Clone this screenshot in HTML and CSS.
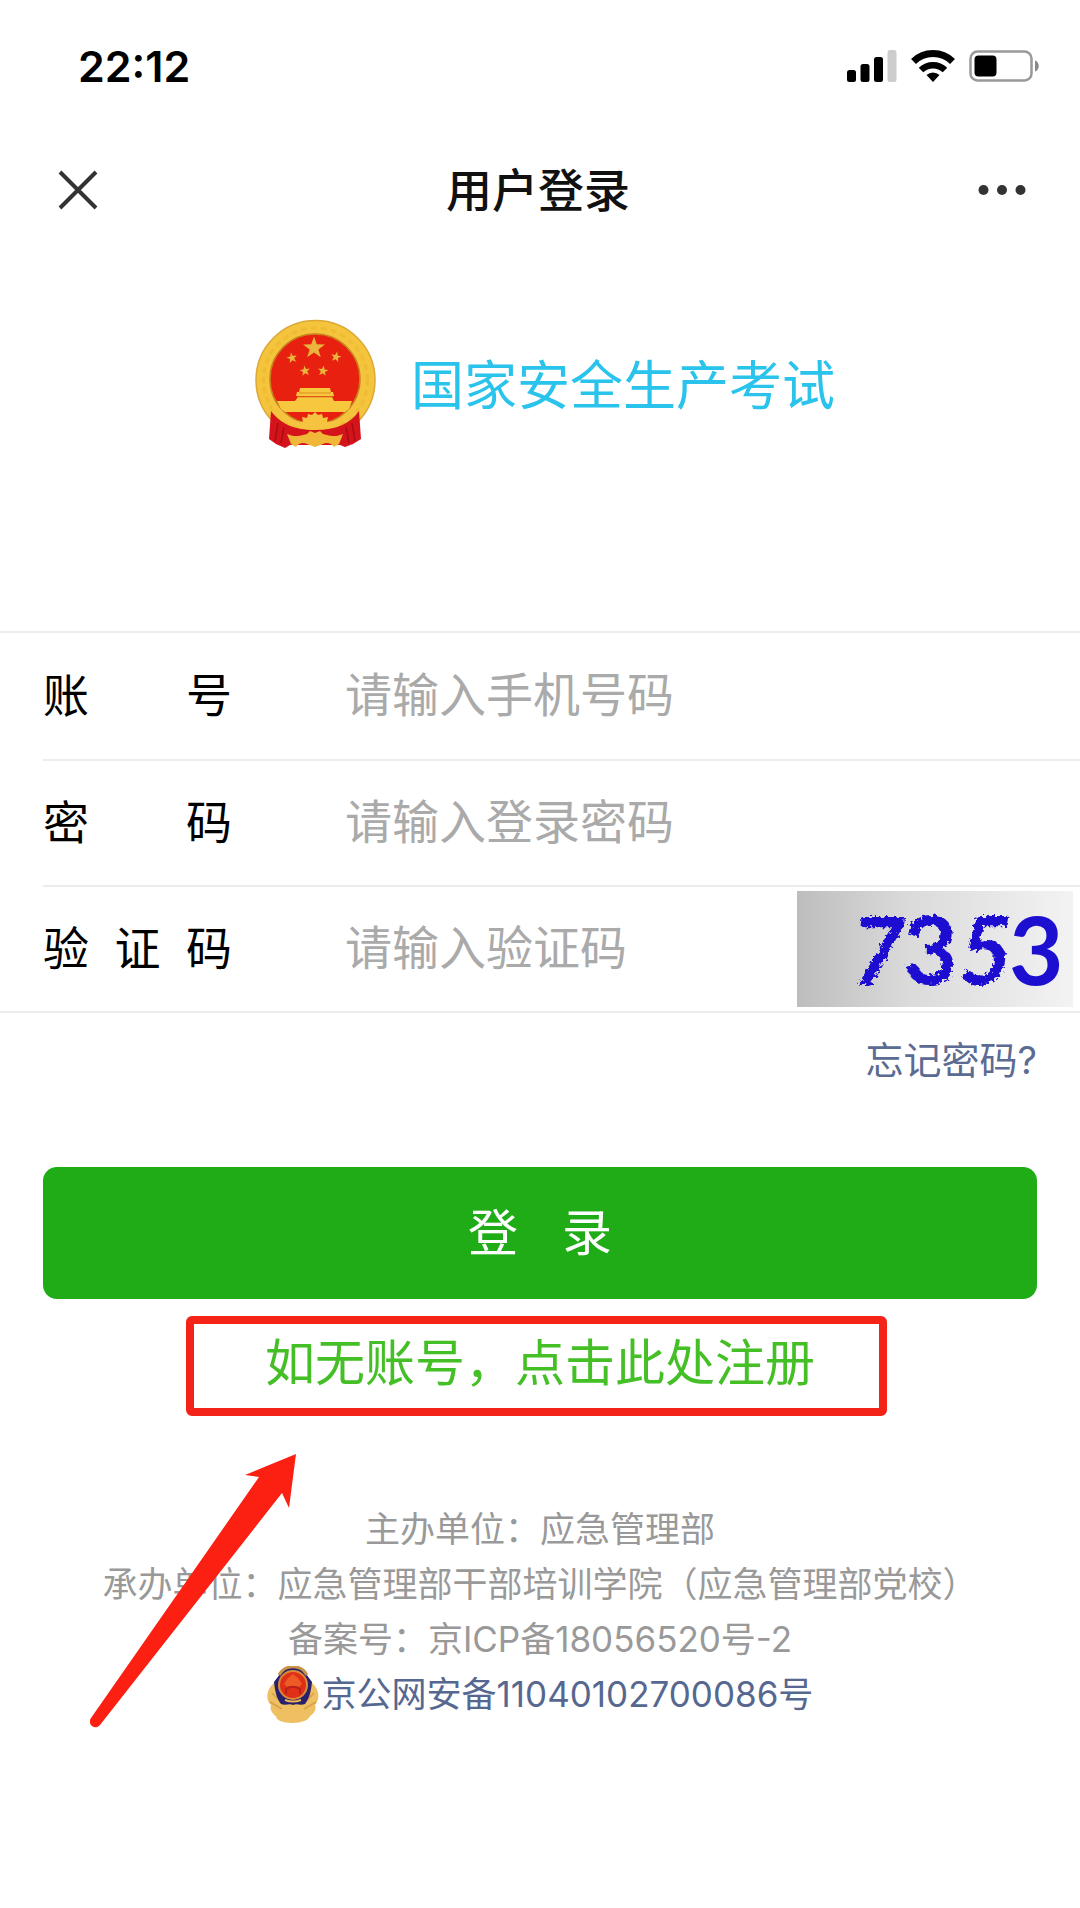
FILE: index.html
```html
<!DOCTYPE html>
<html lang="zh-CN">
<head>
  <meta charset="UTF-8">
  <meta name="viewport" content="width=device-width, initial-scale=1.0">
  <title>用户登录</title>
  <link rel="stylesheet" href="styles.css">
</head>
<body>
  <div class="status-bar">
    <span class="time">22:12</span>
    <div class="status-icons">
      <svg width="50" height="32" viewBox="0 0 50 32">
        <rect x="0" y="20" width="9" height="12" rx="2.5"/>
        <rect x="13.5" y="14" width="9" height="18" rx="2.5"/>
        <rect x="27" y="7" width="9" height="25" rx="2.5"/>
        <rect x="40.5" y="0" width="9" height="32" rx="2.5" fill="#cdcdcd"/>
      </svg>
      <svg width="44" height="32" viewBox="0 0 44 32">
        <path d="M2.500 11.500a28 28 0 0 1 39 0" fill="none" stroke="#000" stroke-width="7"/>
        <path d="M10 20a17.500 17.500 0 0 1 24 0" fill="none" stroke="#000" stroke-width="6.500"/>
        <path d="M22 32l-6.500-7a9.500 9.500 0 0 1 13 0z"/>
      </svg>
      <svg width="71" height="32" viewBox="0 0 71 32">
        <rect x="1.500" y="1.500" width="61" height="29" rx="7" fill="none" stroke="#999" stroke-width="2.500"/>
        <rect x="5.500" y="5.500" width="22" height="21" rx="4"/>
        <path d="M66 10.500c5 1.500 5 9.500 0 11z" fill="#888"/>
      </svg>
    </div>
  </div>

  <header class="nav">
    <button type="button" class="icon-btn" aria-label="关闭">
      <svg width="40" height="40" viewBox="0 0 40 40">
        <path d="M2 2l36 36M38 2L2 38" stroke="#333" stroke-width="4"/>
      </svg>
    </button>
    <h1>用户登录</h1>
    <button type="button" class="icon-btn" aria-label="更多">
      <svg width="48" height="12" viewBox="0 0 48 12">
        <circle cx="5.500" cy="6" r="5" fill="#333"/>
        <circle cx="24" cy="6" r="5" fill="#333"/>
        <circle cx="42.500" cy="6" r="5" fill="#333"/>
      </svg>
    </button>
  </header>

  <main>
    <div class="brand">
      <svg width="122" height="130" viewBox="0 0 122 130">
        <defs>
          <path id="star" d="M0-10L2.400-3.200 9.500-3.100 3.800 1.200 5.900 8.100 0 4 -5.900 8.100 -3.800 1.200 -9.500-3.100 -2.400-3.200z"/>
        </defs>
        <circle cx="60.500" cy="61" r="59.500" fill="#f4c53c" stroke="#dba838" stroke-width="1.500"/>
        <circle cx="60.500" cy="61" r="52" fill="none" stroke="#efbb35" stroke-width="3" stroke-dasharray="6 4"/>
        <circle cx="60" cy="60" r="45" fill="#e8200f" stroke="#c8811d" stroke-width="1.500"/>
        <g fill="#e9b53c">
          <use href="#star" transform="translate(59 29) scale(1.150)"/>
          <use href="#star" transform="translate(37 39) scale(.55) rotate(-12)"/>
          <use href="#star" transform="translate(81 38) scale(.55) rotate(12)"/>
          <use href="#star" transform="translate(50 52) scale(.55) rotate(-8)"/>
          <use href="#star" transform="translate(68 52) scale(.55) rotate(8)"/>
        </g>
        <path d="M45 69h30l1 4h2l1 4H41l1-4h2z M43 78h34l2 4h18l-3 8-4 3H30l-4-3-4-8h18z" fill="#f7c83e"/>
        <path d="M42 78h36M44 74h32" stroke="#e08a22" stroke-width="1"/>
        <!-- ribbon -->
        <path d="M16 92c9 12 22 19 44 19s36-7 44-19l2 28-8 5-8 3-5-2H35l-5 3-9-4-7-5z" fill="#d4131b"/>
        <path d="M23 104l-3 18M29 108l-3 16M97 104l3 18M91 108l3 16" stroke="#a80d16" stroke-width="1.500"/>
        <path d="M17 87c10 11 19 15 31 16l-1-5 5 1 1-4 4 1 3-3 3 3 4-1 1 4 5-1-1 5c12-1 21-5 31-16l-4 9c-9 7-22 12-33 14l-6-3-6 3c-12-2-26-7-34-14z" fill="#f5c340"/>
        <path d="M32 115c5 2 9 3 16 1l4-1 3-3 5 2 5-2 3 3 4 1c7 2 11 1 16-1l-4 10-5 3c-2-4-8-5-11-3l-8 3-8-3c-3-2-9-1-11 3l-5-3z" fill="#f1b738"/>
      </svg>
      <span class="brand-name">国家安全生产考试</span>
    </div>

    <form>
      <div class="fields">
        <div class="field">
          <label for="account">账号</label>
          <input type="text" id="account" placeholder="请输入手机号码">
        </div>
        <div class="field">
          <label for="password">密码</label>
          <input type="password" id="password" placeholder="请输入登录密码">
        </div>
        <div class="field">
          <label for="code">验证码</label>
          <input type="text" id="code" placeholder="请输入验证码">
          <svg class="captcha" width="276" height="116" viewBox="0 0 276 116">
            <defs>
              <linearGradient id="paper" x1="0" y1="0" x2="1" y2="0">
                <stop offset="0" stop-color="#bdbdbd"/>
                <stop offset=".4" stop-color="#dadada"/>
                <stop offset="1" stop-color="#f3f3f3"/>
              </linearGradient>
              <filter id="rough">
                <feTurbulence type="fractalNoise" baseFrequency=".25" numOctaves="2" seed="4"/>
                <feDisplacementMap in="SourceGraphic" scale="8"/>
              </filter>
            </defs>
            <rect width="276" height="116" fill="url(#paper)"/>
            <g class="captcha-digits">
              <text class="slanted" x="54" y="94" filter="url(#rough)">7</text>
              <text x="106" y="93" filter="url(#rough)">3</text>
              <text class="slanted" x="161" y="93" filter="url(#rough)">5</text>
              <text x="212" y="94">3</text>
            </g>
          </svg>
        </div>
      </div>

      <a href="#" class="forgot">忘记密码?</a>

      <button type="submit" class="login-btn"><span>登</span><span>录</span></button>
    </form>

    <div class="register-row">
      <a href="#" class="register">如无账号，点击此处注册</a>
    </div>
  </main>

  <footer>
    <svg class="arrow" width="208" height="276" viewBox="0 0 208 276">
      <path d="M206 2L155 23l14 2L1 266a5 5 0 0 0 9 7L192 41l7 15z" fill="#fb2012"/>
    </svg>
    <p>主办单位：应急管理部</p>
    <p>承办单位：应急管理部干部培训学院（应急管理部党校）</p>
    <p>备案号：京ICP备18056520号-2</p>
    <a href="#" class="police">
      <svg width="52" height="58" viewBox="0 0 52 58">
        <path d="M8 16C-2 24-1 35 4 39c-2 5 3 10 5 11 0 4 6 7 16 7s17-3 18-7c3-2 7-6 5-11 5-5 5-16-4-23z" fill="#eec062"/>
        <path d="M5 27l11 11M3 36l12 7M47 27L36 38M49 36l-12 7" stroke="#d9a04c" stroke-width="1.500" fill="none"/>
        <path d="M13 8C18-1 34-1 39 8l6 8c-1 10-3 17-7 22-5 2-8-1-12 1-4-2-7 1-12-1-4-5-6-12-7-22z" fill="#28206c"/>
        <path d="M12 9C18-2 34-2 40 9" fill="none" stroke="#c79348" stroke-width="3"/>
        <circle cx="26" cy="19" r="14" fill="#e02f17" stroke="#d98b3a" stroke-width="2"/>
        <path d="M17 18l4-6 5-4 5 4 4 6-3 3h-12z" fill="#ee5a26"/>
        <path d="M19 28v-5c4-3 10-3 14 0v5" fill="none" stroke="#b9201a" stroke-width="2"/>
        <path d="M18 34c5 2 11 2 16 0" fill="none" stroke="#efb650" stroke-width="2"/>
      </svg>
      <span>京公网安备11040102700086号</span>
    </a>
  </footer>
</body>
</html>
```

FILE: styles.css
```css
* {
  box-sizing: border-box;
}

body {
  margin: 0;
  font-family: Inter, "Noto Sans CJK SC", sans-serif;
  background-color: #fff;
  color: #000;
}

a {
  text-decoration: none;
}

button {
  border: 0;
  padding: 0;
  font-family: inherit;
  cursor: pointer;
}

svg {
  display: block;
  flex-shrink: 0;
}

.status-bar {
  display: flex;
  justify-content: space-between;
  align-items: center;
  height: 134px;
  padding: 0 40px 2px 78px;
}

.time {
  font-size: 43px;
  font-weight: 600;
}

.status-icons {
  display: flex;
  gap: 14px;
}

.nav {
  display: flex;
  justify-content: space-between;
  align-items: center;
  height: 112px;
  padding: 0 54px 0 58px;
}

.nav h1 {
  margin: 0;
  padding-bottom: 6px;
  font-size: 46px;
  font-weight: 500;
  color: #111;
}

.icon-btn {
  background: none;
}

.brand {
  display: flex;
  justify-content: center;
  align-items: center;
  gap: 34px;
  padding: 73px 0 182px 10px;
}

.brand-name {
  padding-top: 4px;
  font-size: 53px;
  line-height: 64px;
  color: #29c3ec;
}

.fields {
  border-top: 2px solid #ececec;
  border-bottom: 2px solid #ececec;
}

.field {
  display: flex;
  align-items: center;
  height: 126px;
  margin-left: 43px;
  padding-right: 7px;
}

.field + .field {
  border-top: 2px solid #ececec;
}

.field label {
  width: 189px;
  margin-right: 113px;
  padding-bottom: 8px;
  font-size: 46px;
  text-align: justify;
  text-align-last: justify;
}

.field input {
  flex: 1;
  min-width: 0;
  height: 100%;
  padding: 0 0 4px;
  border: 0;
  outline: 0;
  background: none;
  font-family: inherit;
  font-size: 47px;
}

.field input::placeholder {
  color: #aaa;
}

.captcha-digits {
  font-family: Lato, sans-serif;
  font-size: 94px;
  font-weight: 700;
  fill: #1c0fd0;
}

.slanted {
  font-style: italic;
}

.forgot {
  display: block;
  margin: 20px 43px 80px;
  font-size: 38px;
  line-height: 54px;
  text-align: right;
  color: #5b6b92;
}

.login-btn {
  display: flex;
  justify-content: center;
  align-items: center;
  gap: 44px;
  width: calc(100% - 86px);
  height: 132px;
  margin: 0 43px;
  padding-bottom: 8px;
  border-radius: 14px;
  background-color: #20ac17;
  color: #fff;
  font-size: 50px;
}

.register-row {
  display: flex;
  justify-content: center;
  padding: 17px 7px 0 0;
}

.register {
  padding: 4px 64px 10px 71px;
  border: 8px solid #f42318;
  border-radius: 6px;
  font-size: 50px;
  line-height: 70px;
  color: #44bf25;
}

footer {
  position: relative;
  margin-top: 86px;
  padding-bottom: 40px;
  font-size: 35px;
  line-height: 55px;
  text-align: center;
  color: #999;
}

footer p {
  margin: 0;
}

.police {
  display: flex;
  justify-content: center;
  align-items: center;
  gap: 3px;
  height: 55px;
  color: #56688f;
}

/* hand-drawn pointer towards the register link */
.arrow {
  position: absolute;
  left: 90px;
  top: -50px;
}
```
